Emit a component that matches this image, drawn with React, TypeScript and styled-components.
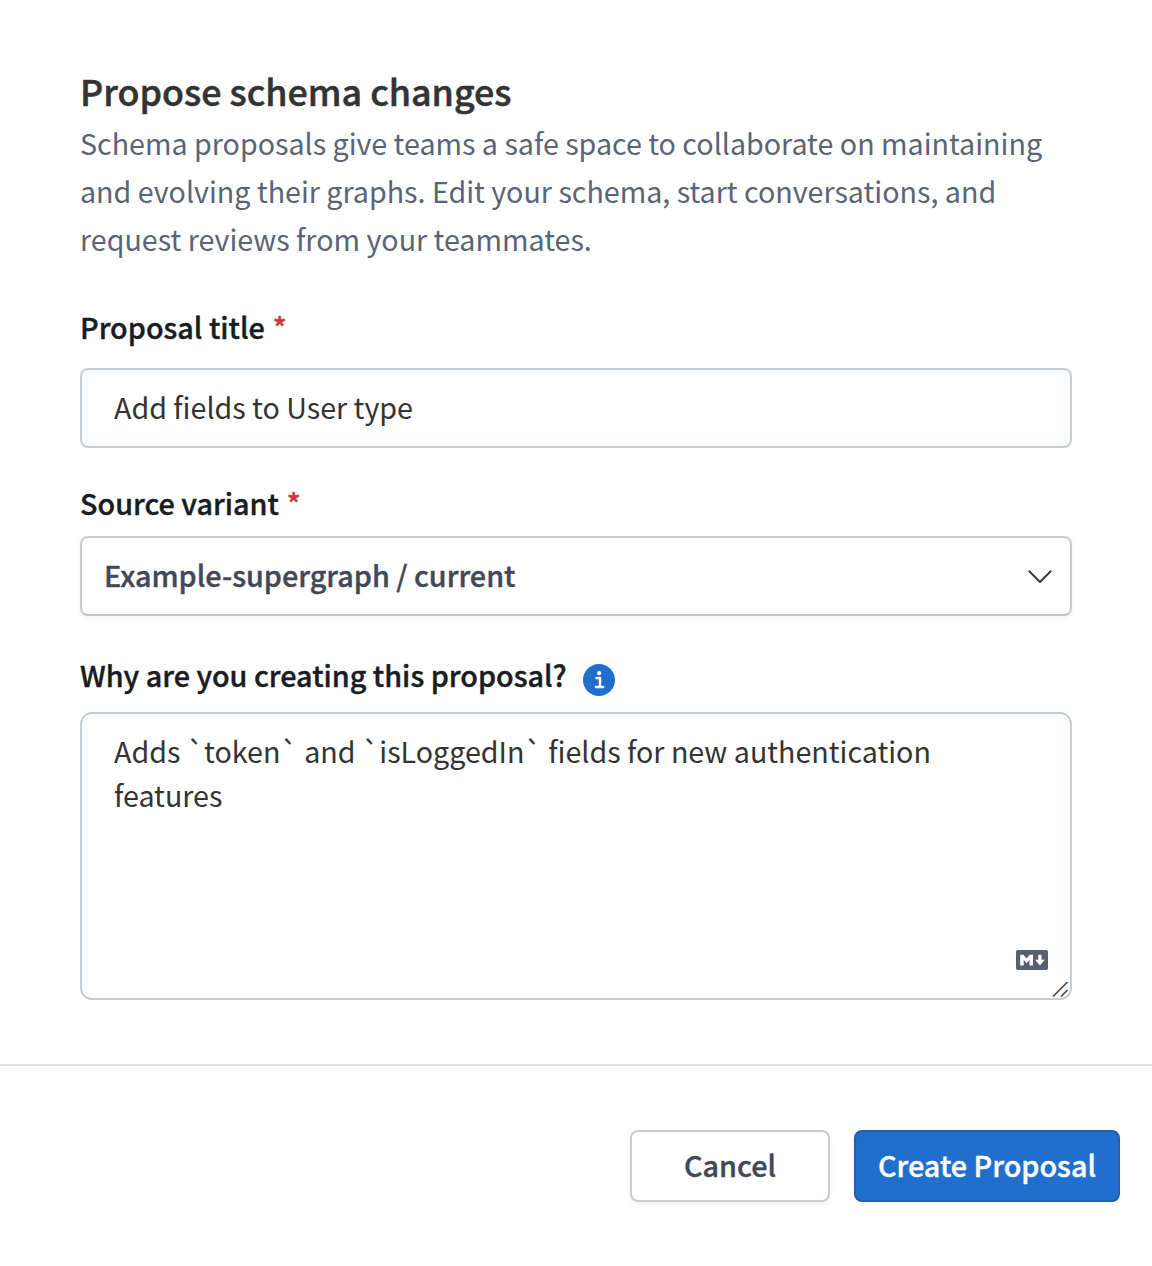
import React from "react";
import styled, { createGlobalStyle } from "styled-components";

const GlobalStyle = createGlobalStyle`
  * { box-sizing: border-box; }
  body {
    margin: 0;
    background: #fff;
    font-family: "Noto Sans CJK SC", "Noto Sans", sans-serif;
    font-size: 28.65px;
    color: #333;
    font-kerning: normal;
  }
`;

const Dialog = styled.main`
  width: 1152px;
  height: 1266px;
  display: flex;
  flex-direction: column;
`;

const Body = styled.section`
  height: 1066px;
  padding: 63px 80px 0;
  border-bottom: 2px solid #dfe1e3;
  display: flex;
  flex-direction: column;
`;

const Title = styled.h1`
  margin: 0 0 2px;
  height: 54px;
  line-height: 54px;
  font-size: 35.85px;
  font-weight: 500;
  color: #333;
  -webkit-text-stroke: 0.5px #333;
`;

const Description = styled.p`
  margin: 0 0 40px;
  line-height: 48px;
  color: #5b6472;
  white-space: nowrap;
`;

const Field = styled.div<{ $after: number }>`
  display: flex;
  flex-direction: column;
  margin-bottom: ${(p) => p.$after}px;
`;

const Label = styled.label<{ $after: number }>`
  display: flex;
  align-items: center;
  height: 48px;
  line-height: 48px;
  margin-bottom: ${(p) => p.$after}px;
  font-size: 28.77px;
  font-weight: 500;
  color: #191c23;
  white-space: pre;
  -webkit-text-stroke: 0.4px currentColor;
`;

const Required = styled.span`
  color: #c93a3a;
  margin-left: 8px;
`;

const TextInput = styled.div`
  height: 80px;
  padding: 0 32px;
  border: 2px solid #c8ced5;
  border-radius: 8px;
  line-height: 74px;
`;

const Select = styled.button`
  height: 80px;
  padding: 0 18px 0 22px;
  border: 2px solid #cbcccd;
  border-bottom-color: #c3c4c5;
  border-radius: 8px;
  background: #fff;
  box-shadow: 0 2px 6px rgba(0, 0, 0, 0.05);
  display: flex;
  align-items: center;
  justify-content: space-between;
  font: inherit;
  font-size: 28.77px;
  font-weight: 500;
  line-height: 44px;
  color: #434857;
  -webkit-text-stroke: 0.4px currentColor;
`;

const SelectValue = styled.span`
  padding-bottom: 2px;
`;

const Chevron = styled.svg`
  margin-top: 2px;
`;

const TextArea = styled.div`
  position: relative;
  height: 288px;
  padding: 15px 32px;
  border: 2px solid #c8ced5;
  border-radius: 12px;
  line-height: 44px;
`;

const MarkdownBadge = styled.svg`
  position: absolute;
  right: 22px;
  bottom: 28px;
`;

const ResizeHandle = styled.svg`
  position: absolute;
  right: 0;
  bottom: 0;
`;

const InfoIcon = styled.svg`
  margin: 9px 0 0 16px;
`;

const Footer = styled.footer`
  display: flex;
  justify-content: flex-end;
  gap: 24px;
  padding: 64px 32px 0;
`;

const Button = styled.button<{ $primary?: boolean }>`
  width: ${(p) => (p.$primary ? 266 : 200)}px;
  height: 72px;
  padding: 0 0 2px;
  border: 2px solid ${(p) => (p.$primary ? "#225fae" : "#cbcccd")};
  border-radius: 8px;
  background: ${(p) => (p.$primary ? "#216fcd" : "#fff")};
  color: ${(p) => (p.$primary ? "#fff" : "#434857")};
  box-shadow: 0 2px 6px rgba(0, 0, 0, 0.05);
  font: inherit;
  font-size: 28.77px;
  font-weight: 500;
  line-height: 44px;
  white-space: nowrap;
  -webkit-text-stroke: 0.4px currentColor;
`;

export default function App() {
  return (
    <Dialog>
      <GlobalStyle />
      <Body>
        <Title>Propose schema changes</Title>
        <Description>
          Schema proposals give teams a safe space to collaborate on maintaining
          <br />
          and evolving their graphs. Edit your schema, start conversations, and
          <br />
          request reviews from your teammates.
        </Description>
        <Field $after={31}>
          <Label $after={17}>
            Proposal title<Required>*</Required>
          </Label>
          <TextInput>Add fields to User type</TextInput>
        </Field>
        <Field $after={35}>
          <Label $after={9}>
            Source variant<Required>*</Required>
          </Label>
          <Select>
            <SelectValue>Example-supergraph / current</SelectValue>
            <Chevron width="24" height="14" viewBox="0 0 24 14" fill="none" stroke="#363b47" strokeWidth="2" strokeLinecap="round" strokeLinejoin="round">
              <path d="M1.3 1.3 12 12 22.7 1.3" />
            </Chevron>
          </Select>
        </Field>
        <Field $after={0}>
          <Label $after={13}>
            Why are you creating this proposal?
            <InfoIcon width="32" height="32" viewBox="0 0 32 32">
              <circle cx="16" cy="16" r="16" fill="#216fcd" />
              <circle cx="16.2" cy="9.2" r="2.1" fill="#fff" />
              <path d="M13.4 14H17V22.7M13 23H20.2" fill="none" stroke="#fff" strokeWidth="2.4" strokeLinecap="round" strokeLinejoin="round" />
            </InfoIcon>
          </Label>
          <TextArea>
            Adds `token` and `isLoggedIn` fields for new authentication
            <br />
            features
            <MarkdownBadge width="32" height="20" viewBox="0 0 32 20">
              <rect width="32" height="20" rx="2" fill="#585f6e" />
              <path d="M4.2 15.4V4.8h3.4l3 3.8 3-3.8H17v10.6h-3.5V9.8l-2.9 3.6-2.9-3.6v5.6zM22.3 4.8h3.2v5h3.2L23.9 15.6 19.1 9.8h3.2z" fill="#fff" />
            </MarkdownBadge>
            <ResizeHandle width="18" height="18" viewBox="0 0 18 18" stroke="#4a4a4a" strokeWidth="1.7">
              <path d="M1 16.5 15.5 2M9 16.5 15.5 10" />
            </ResizeHandle>
          </TextArea>
        </Field>
      </Body>
      <Footer>
        <Button>Cancel</Button>
        <Button $primary>Create Proposal</Button>
      </Footer>
    </Dialog>
  );
}
